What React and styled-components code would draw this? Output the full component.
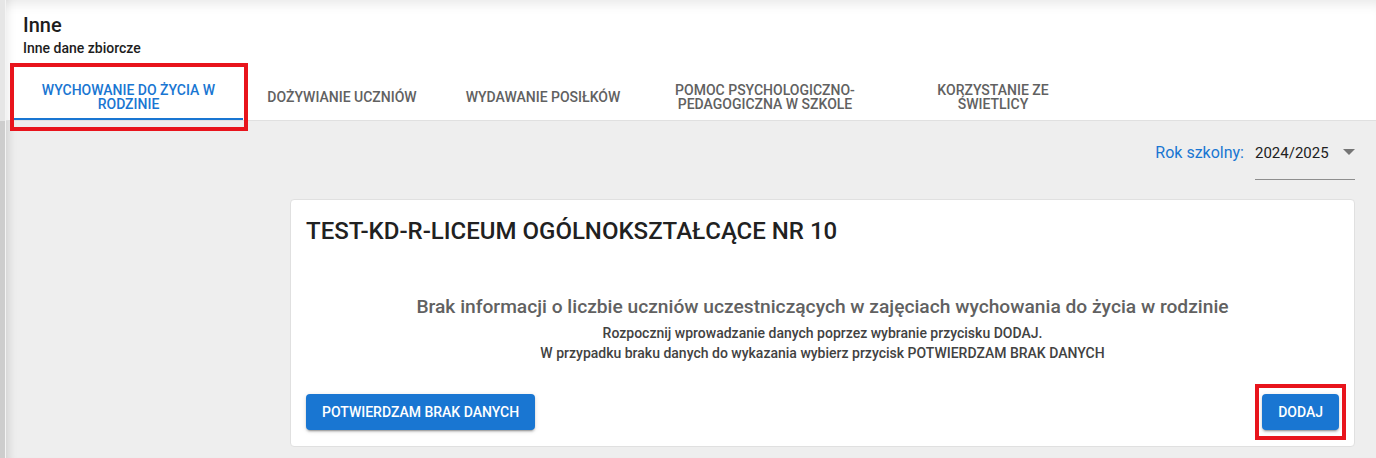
import styled, { createGlobalStyle } from 'styled-components';

const GlobalStyle = createGlobalStyle`
  html, body {
    margin: 0;
    padding: 0;
    background: #eeeeee;
    font-family: Roboto, "Liberation Sans", Arial, sans-serif;
  }
`;

const Page = styled.div`
  display: flex;
  width: 1376px;
  height: 458px;
  overflow: hidden;
  background: #eeeeee;
`;

const DrawerEdge = styled.div`
  width: 5px;
  flex: none;
  border-right: 1px solid #f4f4f4;
  background: linear-gradient(#e6e6e6 0, #e6e6e6 121px, #cdcdcd 121px);
`;

const Main = styled.main`
  flex: 1;
  display: flex;
  flex-direction: column;
  min-width: 0;
  box-shadow: inset 10px 0 10px -8px rgba(0, 0, 0, 0.14);
`;

const Header = styled.header`
  position: relative;
  background: #ffffff;
  padding: 13px 8px 0;
  border-bottom: 1px solid #e0e0e0;
  box-shadow: inset 0 12px 12px -8px rgba(0, 0, 0, 0.09), inset 10px 0 10px -8px rgba(0, 0, 0, 0.08);
`;

const TitleBlock = styled.div`
  padding-left: 9px;
  color: #1d1d1d;
`;

const Title = styled.h1`
  margin: 0;
  font-size: 20px;
  line-height: 24px;
  font-weight: 500;
`;

const Subtitle = styled.div`
  margin-top: 1px;
  font-size: 14px;
  line-height: 20px;
  font-weight: 500;
`;

const TabList = styled.div`
  display: flex;
  margin-top: 14px;
`;

const Tab = styled.button`
  position: relative;
  width: ${(p) => p.$width}px;
  height: 48px;
  padding: 3px 12px 0;
  border: none;
  background: transparent;
  font-family: Roboto, "Liberation Sans", Arial, sans-serif;
  font-size: 14px;
  line-height: 14px;
  font-weight: 500;
  text-transform: uppercase;
  color: ${(p) => (p.$active ? '#1976d2' : '#616161')};
  border-bottom: 2px solid ${(p) => (p.$active ? '#1976d2' : 'transparent')};
  cursor: pointer;
  ${(p) =>
    p.$marked &&
    `
    &::after {
      content: '';
      position: absolute;
      top: -9px;
      left: -4px;
      right: -5px;
      bottom: -13px;
      border: 4px solid #e8141c;
      z-index: 2;
      pointer-events: none;
    }
  `}
`;

const Content = styled.section`
  flex: 1;
  display: flex;
  flex-direction: column;
  padding: 20px 21px 0 284px;
`;

const YearRow = styled.div`
  display: flex;
  justify-content: flex-end;
  align-items: flex-start;
`;

const YearLabel = styled.label`
  font-size: 16px;
  line-height: 24px;
  color: #1976d2;
  margin-right: 11px;
`;

const Select = styled.div`
  width: 100px;
  display: flex;
  justify-content: space-between;
  align-items: flex-start;
  padding-bottom: 14px;
  border-bottom: 1px solid #8e8e8e;
  font-size: 15px;
  line-height: 24px;
  color: #212121;
`;

const Caret = styled.svg`
  margin-top: 8px;
  width: 12px;
  height: 6px;
  fill: #757575;
`;

const Card = styled.div`
  margin-top: 19px;
  background: #ffffff;
  border: 1px solid #e0e0e0;
  border-radius: 4px;
  padding: 15px 15px 16px;
  display: flex;
  flex-direction: column;
`;

const SchoolName = styled.h2`
  margin: 0;
  font-size: 24px;
  line-height: 32px;
  font-weight: 500;
  color: #212121;
`;

const Message = styled.div`
  margin-top: 46px;
  text-align: center;
`;

const Lead = styled.div`
  font-size: 19.2px;
  line-height: 28px;
  font-weight: 500;
  color: #616161;
  margin-bottom: 2px;
`;

const Hint = styled.div`
  font-size: 14px;
  line-height: 20px;
  font-weight: 500;
  color: #424242;
`;

const Actions = styled.div`
  margin-top: 31px;
  display: flex;
  justify-content: space-between;
`;

const Button = styled.button`
  position: relative;
  height: 36px;
  padding: 0 16px;
  border: none;
  border-radius: 4px;
  background: #1976d2;
  color: #ffffff;
  font-family: Roboto, "Liberation Sans", Arial, sans-serif;
  font-size: 14px;
  font-weight: 500;
  text-transform: uppercase;
  box-shadow: 0 3px 1px -2px rgba(0, 0, 0, 0.2), 0 2px 2px 0 rgba(0, 0, 0, 0.14),
    0 1px 5px 0 rgba(0, 0, 0, 0.12);
  cursor: pointer;
  ${(p) =>
    p.$marked &&
    `
    &::after {
      content: '';
      position: absolute;
      top: -10px;
      left: -7px;
      right: -7px;
      bottom: -10px;
      border: 4px solid #e8141c;
      pointer-events: none;
    }
  `}
`;

const tabs = [
  { label: ['Wychowanie do życia w', 'rodzinie'], width: 229, active: true },
  { label: ['Dożywianie uczniów'], width: 198 },
  { label: ['Wydawanie posiłków'], width: 204 },
  { label: ['Pomoc psychologiczno-', 'pedagogiczna w szkole'], width: 240 },
  { label: ['Korzystanie ze', 'świetlicy'], width: 216 },
];

export default function App() {
  return (
    <>
      <GlobalStyle />
      <Page>
        <DrawerEdge />
        <Main>
          <Header>
            <TitleBlock>
              <Title>Inne</Title>
              <Subtitle>Inne dane zbiorcze</Subtitle>
            </TitleBlock>
            <TabList>
              {tabs.map((t) => (
                <Tab key={t.label[0]} $width={t.width} $active={t.active} $marked={t.active}>
                  {t.label.map((line, i) => (
                    <span key={line}>
                      {i > 0 && <br />}
                      {line}
                    </span>
                  ))}
                </Tab>
              ))}
            </TabList>
          </Header>
          <Content>
            <YearRow>
              <YearLabel>Rok szkolny:</YearLabel>
              <Select>
                <span>2024/2025</span>
                <Caret viewBox="0 0 12 6">
                  <path d="M0 0h12L6 6z" />
                </Caret>
              </Select>
            </YearRow>
            <Card>
              <SchoolName>TEST-KD-R-LICEUM OGÓLNOKSZTAŁCĄCE NR 10</SchoolName>
              <Message>
                <Lead>
                  Brak informacji o liczbie uczniów uczestniczących w zajęciach wychowania do życia w rodzinie
                </Lead>
                <Hint>Rozpocznij wprowadzanie danych poprzez wybranie przycisku DODAJ.</Hint>
                <Hint>W przypadku braku danych do wykazania wybierz przycisk POTWIERDZAM BRAK DANYCH</Hint>
              </Message>
              <Actions>
                <Button>Potwierdzam brak danych</Button>
                <Button $marked>Dodaj</Button>
              </Actions>
            </Card>
          </Content>
        </Main>
      </Page>
    </>
  );
}
